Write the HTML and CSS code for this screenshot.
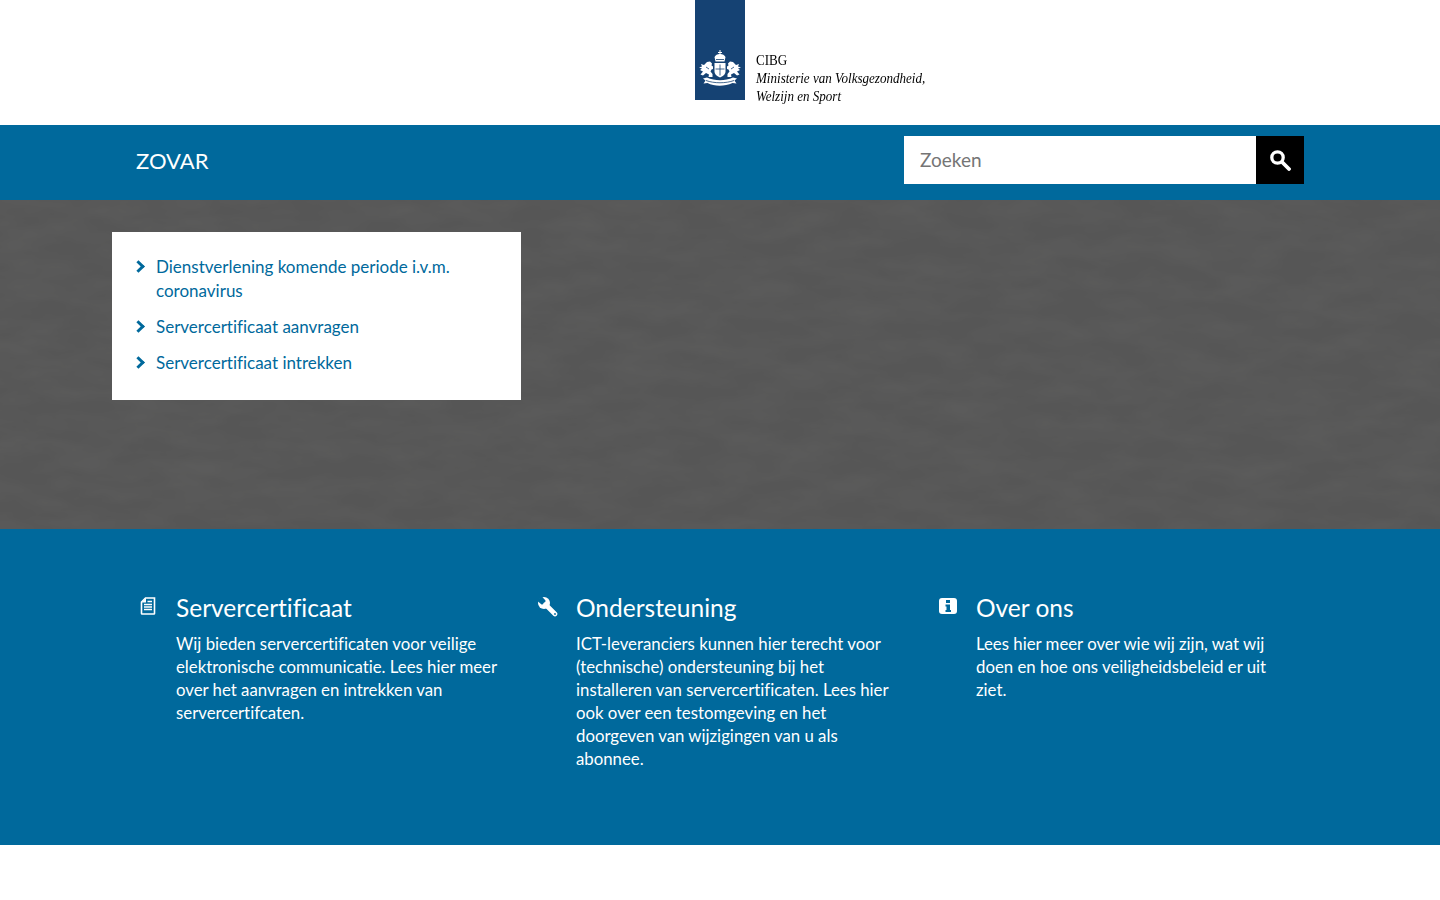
FILE: index.html
```html
<!DOCTYPE html>
<html lang="nl">
  <head>
    <meta charset="UTF-8" />
    <meta name="viewport" content="width=device-width, initial-scale=1.0" />
    <title>ZOVAR</title>
    <link rel="stylesheet" href="styles.css">
  </head>
  <body>
    <header class="logo-bar">
      <a class="logo" href="#">
        <span class="logo-band">
          <svg class="arms" viewBox="0 0 44 38" width="44" height="38">
            <g fill="#fff">
              <!-- crown -->
              <path d="M21.500 0h1v2h1.500v1h-1.500v1c2 0 4 1 5 3l-1 4.500H17.500L16.500 7c1-2 3-3 5-3V3H20V2h1.500z"/>
              <!-- shield -->
              <path d="M16.500 13h11v8.500c0 3-3 5-5.500 6-2.500-1-5.500-3-5.500-6z"/>
              <!-- ribbon -->
              <path d="M5 28.500l4-1c8 3.500 18 3.500 26 0l4 1-2.500 2 2 3-4-.5c-8 3.500-18 3.500-25 0l-4 .5 2-3z"/>
              <!-- lions -->
              <g id="lion">
                <path d="M9 12l3-.5 2 2-.5 2 1.500 1v2.500l-1.500.5-1 2 2 2.500v3h-4l.5-2.500-3-1.500-3 2.500-2.500-1 2.500-3-3-1.500 2-1.500-3-1 3-1-1-2.500 3 1z"/>
              </g>
              <use href="#lion" transform="matrix(-1 0 0 1 44 0)"/>
            </g>
            <g fill="none" stroke="#154273" stroke-width=".8">
              <path d="M22 14.500v11M17.500 19h9"/>
              <path d="M18 9.500h8M8 30.500c8 3 20 3 28 0"/>
              <path d="M8 17l3 2M36 17l-3 2"/>
            </g>
          </svg>
        </span>
        <span class="logo-text">
          <span class="logo-org">CIBG</span>
          <em>Ministerie van Volksgezondheid,</em>
          <em>Welzijn en Sport</em>
        </span>
      </a>
    </header>

    <div class="title-bar">
      <div class="wrap title-row">
        <a class="site-name" href="#">ZOVAR</a>
        <form class="search">
          <input type="text" placeholder="Zoeken" />
          <button type="button" aria-label="Zoeken">
            <svg viewBox="0 0 21 21" width="21" height="21">
              <circle cx="7.500" cy="7.500" r="5.700" fill="none" stroke="#fff" stroke-width="3.300"/>
              <path d="M12.500 12.500l6.500 6.500" stroke="#fff" stroke-width="3.800" stroke-linecap="round"/>
            </svg>
          </button>
        </form>
      </div>
    </div>

    <section class="hero">
      <svg class="hero-texture" width="1440" height="329">
        <filter id="grain">
          <feTurbulence type="fractalNoise" baseFrequency="0.018 0.05" numOctaves="3" seed="7"/>
          <feColorMatrix values="0 0 0 0 0.27  0 0 0 0 0.27  0 0 0 0 0.26  0.16 0 0 0 -0.05"/>
        </filter>
        <rect width="1440" height="329" filter="url(#grain)"/>
      </svg>
      <div class="wrap hero-inner">
        <ul class="quick-links">
          <li><a href="#">Dienstverlening komende periode i.v.m. coronavirus</a></li>
          <li><a href="#">Servercertificaat aanvragen</a></li>
          <li><a href="#">Servercertificaat intrekken</a></li>
        </ul>
      </div>
    </section>

    <section class="info">
      <div class="wrap info-grid">
        <article class="info-col">
          <svg class="info-icon" viewBox="0 0 16 18" width="16" height="18">
            <path d="M5.500 1h9v15.500a.5.500 0 0 1-.5.500H2a.5.500 0 0 1-.5-.5V5z" fill="none" stroke="#fff" stroke-width="1.600"/>
            <path d="M1.500 5.500H6V1z" fill="#fff"/>
            <path d="M7.500 4.500h4.500M4 7.500h8M4 10h8M4 12.500h8" stroke="#fff" stroke-width="1.500"/>
          </svg>
          <h2>Servercertificaat</h2>
          <p>Wij bieden servercertificaten voor veilige elektronische communicatie. Lees hier meer over het aanvragen en intrekken van servercertifcaten.</p>
        </article>
        <article class="info-col">
          <svg class="info-icon icon-wrench" viewBox="0 0 20 20" width="20" height="20">
            <circle cx="6" cy="6" r="6" fill="#fff"/>
            <path d="M-1 3.500L3.500-1l4 4.500-.5 3.500-3.500.5z" fill="#00699c"/>
            <path d="M7.500 7.500L17 17" stroke="#fff" stroke-width="4.600" stroke-linecap="round"/>
            <circle cx="17" cy="17" r=".9" fill="#00699c"/>
          </svg>
          <h2>Ondersteuning</h2>
          <p>ICT-leveranciers kunnen hier terecht voor (technische) ondersteuning bij het installeren van servercertificaten. Lees hier ook over een testomgeving en het doorgeven van wijzigingen van u als abonnee.</p>
        </article>
        <article class="info-col">
          <svg class="info-icon icon-about" viewBox="0 0 18 16" width="18" height="16">
            <rect width="18" height="16" rx="3" fill="#fff"/>
            <path d="M7 2h4v3H7zM6.500 6.500H11V12h1v2H6.500v-2h1V8.500h-1z" fill="#00699c"/>
          </svg>
          <h2>Over ons</h2>
          <p>Lees hier meer over wie wij zijn, wat wij doen en hoe ons veiligheidsbeleid er uit ziet.</p>
        </article>
      </div>
    </section>
  </body>
</html>
```

FILE: styles.css
```css
body {
  margin: 0;
  background-color: #fff;
  font-family: Lato, "Noto Sans", Arial, sans-serif;
  font-variant-ligatures: none;
  color: #000;
}

a {
  text-decoration: none;
}

.wrap {
  width: 1216px;
  margin: 0 auto;
}

.logo-bar {
  height: 125px;
}

.logo {
  display: flex;
  width: 230px;
  margin-left: 695px;
}

.logo-band {
  display: flex;
  flex: none;
  align-items: flex-end;
  justify-content: center;
  width: 50px;
  height: 100px;
  padding-bottom: 12px;
  box-sizing: border-box;
  background-color: #154273;
}

.logo-text {
  display: flex;
  flex-direction: column;
  margin: 51px 0 0 11px;
  font-family: "Liberation Serif", serif;
  font-size: 14.500px;
  line-height: 18px;
  color: #000;
  white-space: nowrap;
  transform: scaleX(0.9);
  transform-origin: left top;
}

.title-bar {
  height: 75px;
  background-color: #00699c;
}

.title-row {
  display: flex;
  align-items: flex-start;
  justify-content: space-between;
  height: 75px;
  padding: 11px 24px 0;
  box-sizing: border-box;
}

.site-name {
  margin-top: 10px;
  font-size: 22px;
  line-height: 30px;
  color: #fff;
}

.search {
  display: flex;
}

.search input {
  width: 352px;
  height: 48px;
  padding: 0 16px 2px;
  box-sizing: border-box;
  border: 0;
  border-radius: 0;
  font-family: inherit;
  font-size: 19px;
  background-color: #fff;
}

.search input::placeholder {
  color: #757575;
}

.search button {
  display: flex;
  align-items: center;
  justify-content: center;
  width: 48px;
  height: 48px;
  padding: 0;
  border: 0;
  background-color: #000;
}

.hero {
  position: relative;
  height: 329px;
  background-color: #565656;
  overflow: hidden;
}

.hero-texture {
  position: absolute;
  top: 0;
  left: 0;
}

.hero-inner {
  position: relative;
  padding-top: 32px;
}

.quick-links {
  width: 409px;
  height: 168px;
  margin: 0;
  padding: 23px 24px 0;
  box-sizing: border-box;
  list-style: none;
  background-color: #fff;
}

.quick-links li {
  position: relative;
  padding-left: 20px;
  margin-bottom: 12px;
  font-size: 17px;
  line-height: 24px;
}

.quick-links li::before {
  content: "";
  position: absolute;
  top: 7px;
  left: -2px;
  width: 6px;
  height: 6px;
  border-top: 3px solid #00699c;
  border-right: 3px solid #00699c;
  transform: rotate(45deg);
}

.quick-links a {
  color: #00699c;
}

.info {
  height: 316px;
  background-color: #00699c;
  color: #fff;
}

.info-grid {
  display: grid;
  grid-template-columns: repeat(3, 400px);
  padding: 62px 0 0 24px;
  box-sizing: border-box;
}

.info-col {
  position: relative;
  padding-left: 40px;
}

.info-icon {
  position: absolute;
  top: 6px;
  left: 4px;
}

.icon-wrench {
  left: 2px;
}

.icon-about {
  top: 7px;
  left: 3px;
}

.info-col h2 {
  margin: 0 0 7px;
  font-size: 24.500px;
  font-weight: 400;
  line-height: 34px;
}

.info-col p {
  width: 323px;
  margin: 0;
  font-size: 16.800px;
  line-height: 23px;
}
```
